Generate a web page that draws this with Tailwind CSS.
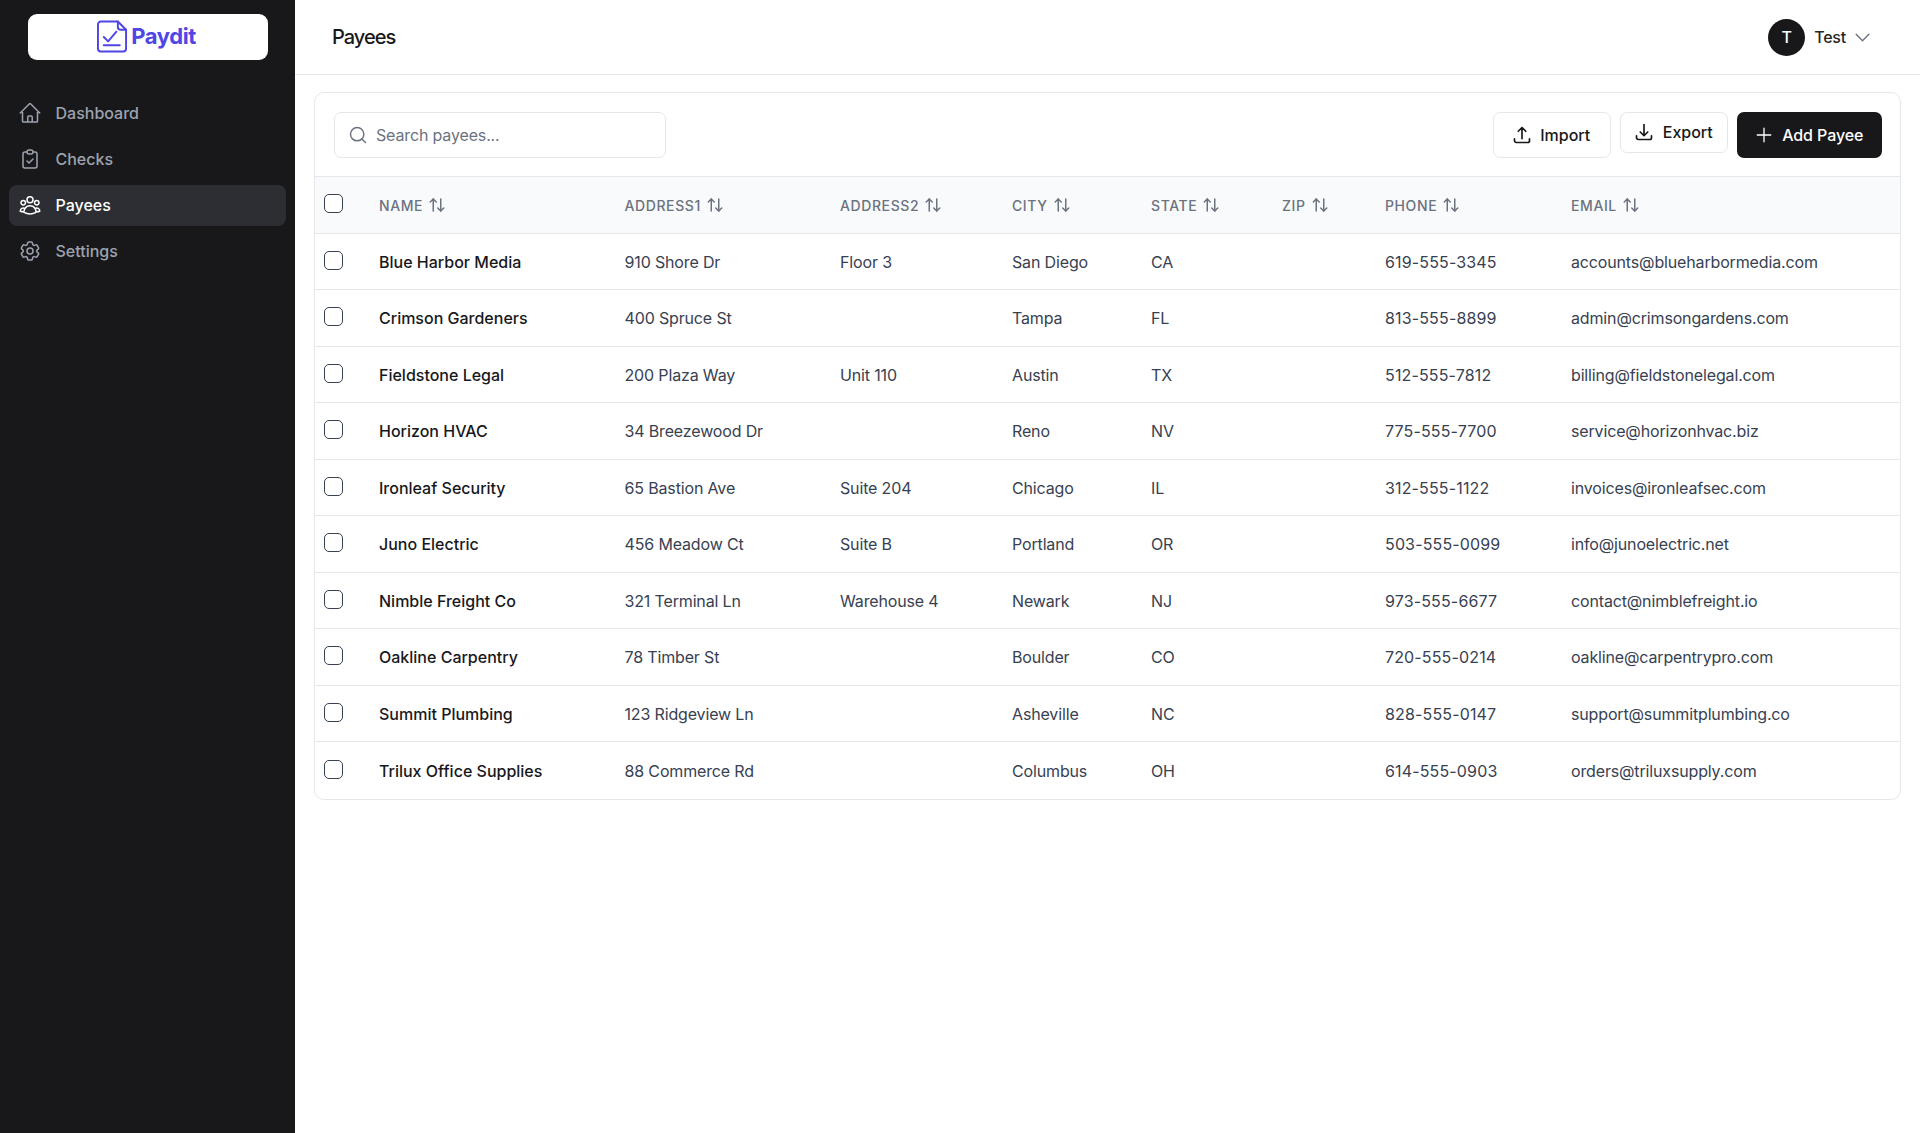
<!DOCTYPE html>
<html lang="en">
<head>
    <meta charset="UTF-8">
    <meta name="viewport" content="width=device-width, initial-scale=1.0">
    <title>Payees</title>
    <script src="https://cdn.jsdelivr.net/npm/@tailwindcss/browser@4"></script>
</head>
<body class="bg-white text-gray-900 font-[Inter,sans-serif]">
    <div class="flex h-[1133px] overflow-hidden">
        <!-- sidebar -->
        <aside class="w-[295px] shrink-0 bg-[#18181b] px-[9px] pt-[13.5px]">
            <div class="mx-[18.5px] h-[46.5px] bg-white rounded-[9px] flex items-center justify-center gap-[3px] pr-[2px]">
                <svg class="w-[31px] h-[33px]" viewBox="0 0 32 34" fill="none" stroke="#4f46e5" stroke-width="2" stroke-linejoin="round" stroke-linecap="round">
                    <path d="M4 1.5h17.5L30 10v19.5a3 3 0 0 1-3 3H4a3 3 0 0 1-3-3v-25a3 3 0 0 1 3-3z"/>
                    <path d="M21.5 1.5V7a3 3 0 0 0 3 3H30"/>
                    <path d="M7 17.5l4.5 4.5L20 12"/>
                    <path d="M7 26h16.5"/>
                </svg>
                <span class="text-[22px] font-bold text-[#4f46e5] tracking-[-0.4px]">Paydit</span>
            </div>
            <nav class="mt-[32.5px] flex flex-col gap-[5px] text-[16px] font-medium">
                <a class="h-[41px] px-[9px] flex items-center gap-[13.5px] rounded-[8px] text-[#9ca3af]">
                    <svg class="w-6 h-6" fill="none" viewBox="0 0 24 24" stroke="currentColor" stroke-width="1.5" stroke-linecap="round" stroke-linejoin="round"><path d="M2.25 12l8.954-8.955c.44-.439 1.152-.439 1.591 0L21.75 12M4.5 9.75v10.125c0 .621.504 1.125 1.125 1.125H9.75v-4.875c0-.621.504-1.125 1.125-1.125h2.25c.621 0 1.125.504 1.125 1.125V21h4.125c.621 0 1.125-.504 1.125-1.125V9.75M8.25 21h8.25"/></svg>
                    Dashboard
                </a>
                <a class="h-[41px] px-[9px] flex items-center gap-[13.5px] rounded-[8px] text-[#9ca3af]">
                    <svg class="w-6 h-6" fill="none" viewBox="0 0 24 24" stroke="currentColor" stroke-width="1.5" stroke-linecap="round" stroke-linejoin="round"><path d="M9 5H7a2 2 0 00-2 2v12a2 2 0 002 2h10a2 2 0 002-2V7a2 2 0 00-2-2h-2M9 5a2 2 0 002 2h2a2 2 0 002-2M9 5a2 2 0 012-2h2a2 2 0 012 2m-6 9l2 2 4-4"/></svg>
                    Checks
                </a>
                <a class="h-[41px] px-[9px] flex items-center gap-[13.5px] rounded-[8px] bg-[#2d2e33] text-white">
                    <svg class="w-6 h-6" fill="none" viewBox="0 0 24 24" stroke="currentColor" stroke-width="1.5" stroke-linecap="round" stroke-linejoin="round"><path d="M18 18.72a9.094 9.094 0 003.741-.479 3 3 0 00-4.682-2.72m.94 3.198l.001.031c0 .225-.012.447-.037.666A11.944 11.944 0 0112 21c-2.17 0-4.207-.576-5.963-1.584A6.062 6.062 0 016 18.719m12 0a5.971 5.971 0 00-.941-3.197m0 0A5.995 5.995 0 0012 12.75a5.995 5.995 0 00-5.058 2.772m0 0a3 3 0 00-4.681 2.72 8.986 8.986 0 003.74.477m.94-3.197a5.971 5.971 0 00-.94 3.197M15 6.75a3 3 0 11-6 0 3 3 0 016 0zm6 3a2.25 2.25 0 11-4.5 0 2.25 2.25 0 014.5 0zm-13.5 0a2.25 2.25 0 11-4.5 0 2.25 2.25 0 014.5 0z"/></svg>
                    Payees
                </a>
                <a class="h-[41px] px-[9px] flex items-center gap-[13.5px] rounded-[8px] text-[#9ca3af]">
                    <svg class="w-6 h-6" fill="none" viewBox="0 0 24 24" stroke="currentColor" stroke-width="1.5" stroke-linecap="round" stroke-linejoin="round"><path d="M9.594 3.94c.09-.542.56-.94 1.11-.94h2.593c.55 0 1.02.398 1.11.94l.213 1.281c.063.374.313.686.645.87.074.04.147.083.22.127.324.196.72.257 1.075.124l1.217-.456a1.125 1.125 0 011.37.49l1.296 2.247a1.125 1.125 0 01-.26 1.431l-1.003.827c-.293.24-.438.613-.431.992a6.759 6.759 0 010 .255c-.007.378.138.75.43.99l1.005.828c.424.35.534.954.26 1.43l-1.298 2.247a1.125 1.125 0 01-1.369.491l-1.217-.456c-.355-.133-.75-.072-1.076.124a6.57 6.57 0 01-.22.128c-.331.183-.581.495-.644.869l-.213 1.28c-.09.543-.56.941-1.11.941h-2.594c-.55 0-1.02-.398-1.11-.94l-.213-1.281c-.062-.374-.312-.686-.644-.87a6.52 6.52 0 01-.22-.127c-.325-.196-.72-.257-1.076-.124l-1.217.456a1.125 1.125 0 01-1.369-.49l-1.297-2.247a1.125 1.125 0 01.26-1.431l1.004-.827c.292-.24.437-.613.43-.992a6.932 6.932 0 010-.255c.007-.378-.138-.75-.43-.99l-1.004-.828a1.125 1.125 0 01-.26-1.43l1.297-2.247a1.125 1.125 0 011.37-.491l1.216.456c.356.133.751.072 1.076-.124.072-.044.146-.087.22-.128.332-.183.582-.495.644-.869l.214-1.281z"/><path d="M15 12a3 3 0 11-6 0 3 3 0 016 0z"/></svg>
                    Settings
                </a>
            </nav>
        </aside>

        <main class="flex-1 min-w-0">
            <!-- top bar -->
            <header class="h-[75px] border-b border-[#e5e7eb] pl-[37px] pr-[48px] flex items-center justify-between">
                <h1 class="text-[20px] font-medium tracking-[-1px] text-[#18181b]">Payees</h1>
                <div class="flex items-center">
                    <div class="w-[37px] h-[37px] rounded-full bg-[#18181b] text-white flex items-center justify-center text-[16px] font-medium">T</div>
                    <span class="ml-[9px] text-[16px] font-medium tracking-[-0.2px] text-[#27272a]">Test</span>
                    <svg class="ml-[7px] w-[19px] h-[19px] text-[#6b7280]" fill="none" viewBox="0 0 24 24" stroke="currentColor" stroke-width="1.75" stroke-linecap="round" stroke-linejoin="round"><path d="M4 8l8 8 8-8"/></svg>
                </div>
            </header>

            <div class="pt-[17px] pl-[19px] pr-[19px]">
                <div class="border border-[#e5e7eb] rounded-[10px] overflow-hidden">
                    <!-- toolbar -->
                    <div class="h-[84px] pl-[19px] pr-[18.5px] pt-[19px] flex items-start justify-between border-b border-[#e5e7eb]">
                        <div class="w-[332px] h-[46px] border border-[#e5e7eb] rounded-[7px] flex items-center pl-[13px]">
                            <svg class="w-[20px] h-[20px] text-[#6b7280]" fill="none" viewBox="0 0 24 24" stroke="currentColor" stroke-width="1.75" stroke-linecap="round" stroke-linejoin="round"><circle cx="11" cy="11" r="8"/><path d="M21 21l-4.3-4.3"/></svg>
                            <span class="ml-[8px] text-[16px] tracking-[-0.15px] text-[#6b7280]">Search payees...</span>
                        </div>
                        <div class="flex items-start gap-[9.5px]">
                            <button class="h-[46px] w-[117.5px] pr-[1px] border border-[#e5e7eb] rounded-[7px] flex items-center justify-center gap-[8px] text-[16px] font-medium text-[#18181b]">
                                <svg class="w-[20px] h-[20px]" fill="none" viewBox="0 0 24 24" stroke="currentColor" stroke-width="2" stroke-linecap="round" stroke-linejoin="round"><path d="M3 16.5v2.25A2.25 2.25 0 005.25 21h13.5A2.25 2.25 0 0021 18.75V16.5m-13.5-9L12 3m0 0l4.5 4.5M12 3v13.5"/></svg>
                                Import
                            </button>
                            <button class="h-[40.5px] w-[107.5px] pr-[1px] border border-[#e5e7eb] rounded-[7px] flex items-center justify-center gap-[9px] text-[16px] font-medium text-[#18181b]">
                                <svg class="w-[20px] h-[20px]" fill="none" viewBox="0 0 24 24" stroke="currentColor" stroke-width="2" stroke-linecap="round" stroke-linejoin="round"><path d="M3 16.5v2.25A2.25 2.25 0 005.25 21h13.5A2.25 2.25 0 0021 18.75V16.5M16.5 12L12 16.5m0 0L7.5 12m4.5 4.5V3"/></svg>
                                Export
                            </button>
                            <button class="h-[46px] w-[144.5px] bg-[#18181b] rounded-[7px] flex items-center justify-center gap-[9px] text-[16px] font-medium tracking-[-0.1px] text-white">
                                <svg class="w-[18px] h-[18px]" fill="none" viewBox="0 0 24 24" stroke="currentColor" stroke-width="1.75" stroke-linecap="round" stroke-linejoin="round"><path d="M12 3v18M3 12h18"/></svg>
                                Add Payee
                            </button>
                        </div>
                    </div>
                    <!-- table -->
                    <div id="headRow" class="h-[56.5px] pt-[1px] bg-[#f9fafb] border-b border-[#e5e7eb] grid grid-cols-[64px_245.5px_215.5px_172px_139px_131px_103px_186px_1fr] items-center text-[14px] font-medium tracking-[0.6px] text-[#6b7280]"></div>
                    <div id="rows" class="text-[16px] text-[#374151] tracking-[-0.15px]"></div>
                </div>
            </div>
        </main>
    </div>

    <script>
        const heads = ["NAME", "ADDRESS1", "ADDRESS2", "CITY", "STATE", "ZIP", "PHONE", "EMAIL"];
        const payees = [
            ["Blue Harbor Media", "910 Shore Dr", "Floor 3", "San Diego", "CA", "", "619-555-3345", "accounts@blueharbormedia.com"],
            ["Crimson Gardeners", "400 Spruce St", "", "Tampa", "FL", "", "813-555-8899", "admin@crimsongardens.com"],
            ["Fieldstone Legal", "200 Plaza Way", "Unit 110", "Austin", "TX", "", "512-555-7812", "billing@fieldstonelegal.com"],
            ["Horizon HVAC", "34 Breezewood Dr", "", "Reno", "NV", "", "775-555-7700", "service@horizonhvac.biz"],
            ["Ironleaf Security", "65 Bastion Ave", "Suite 204", "Chicago", "IL", "", "312-555-1122", "invoices@ironleafsec.com"],
            ["Juno Electric", "456 Meadow Ct", "Suite B", "Portland", "OR", "", "503-555-0099", "info@junoelectric.net"],
            ["Nimble Freight Co", "321 Terminal Ln", "Warehouse 4", "Newark", "NJ", "", "973-555-6677", "contact@nimblefreight.io"],
            ["Oakline Carpentry", "78 Timber St", "", "Boulder", "CO", "", "720-555-0214", "oakline@carpentrypro.com"],
            ["Summit Plumbing", "123 Ridgeview Ln", "", "Asheville", "NC", "", "828-555-0147", "support@summitplumbing.co"],
            ["Trilux Office Supplies", "88 Commerce Rd", "", "Columbus", "OH", "", "614-555-0903", "orders@triluxsupply.com"]
        ];

        const checkbox = `<div class="pl-[9px] pb-[3px]"><input type="checkbox" class="block appearance-none w-[19px] h-[19px] border-[1.5px] border-[#374151] rounded-[5px] bg-white"></div>`;
        const sortIcon = `<svg class="w-[18px] h-[18px] text-[#6b7280]" fill="none" viewBox="0 0 24 24" stroke="currentColor" stroke-width="2" stroke-linecap="round" stroke-linejoin="round"><path d="M21 16l-4 4-4-4"/><path d="M17 20V4"/><path d="M3 8l4-4 4 4"/><path d="M7 4v16"/></svg>`;

        document.getElementById("headRow").innerHTML = checkbox + heads.map(h =>
            `<div class="flex items-center gap-[5px]">${h}${sortIcon}</div>`).join("");

        document.getElementById("rows").innerHTML = payees.map((p, i) => {
            const line = i < payees.length - 1 ? "border-b border-[#e5e7eb]" : "";
            const cells = p.map((v, j) => {
                let cls = "";
                if (j === 0) cls = "font-medium text-[#18181b] tracking-normal";
                if (j === 6) cls = "tracking-[0.15px]";
                return `<div class="${cls}">${v}</div>`;
            }).join("");
            return `<div class="h-[56.5px] pt-[1px] grid grid-cols-[64px_245.5px_215.5px_172px_139px_131px_103px_186px_1fr] items-center ${line}">${checkbox}${cells}</div>`;
        }).join("");
    </script>
</body>
</html>
